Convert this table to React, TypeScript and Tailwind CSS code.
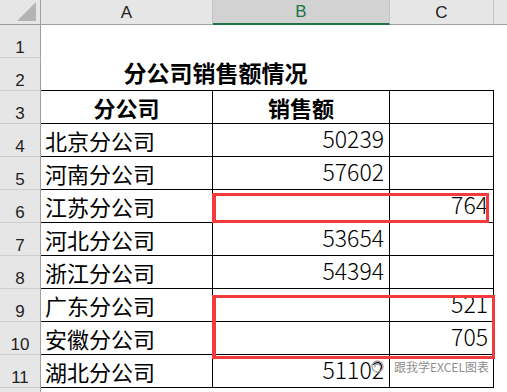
const ROW = "grid h-[33px] grid-cols-[41px_172px_177px_104px_1fr]";
const NUM_CELL =
  "flex items-end justify-center border-r border-b border-r-[#9e9e9e] border-b-[#cfcfcf] bg-[#e6e6e6] pb-[1px] font-['Liberation_Sans',sans-serif] text-[17px] leading-none text-[#222]";

const rows = [
  { n: 4, name: "北京分公司", b: "50239", c: "" },
  { n: 5, name: "河南分公司", b: "57602", c: "" },
  { n: 6, name: "江苏分公司", b: "", c: "764" },
  { n: 7, name: "河北分公司", b: "53654", c: "" },
  { n: 8, name: "浙江分公司", b: "54394", c: "" },
  { n: 9, name: "广东分公司", b: "", c: "521" },
  { n: 10, name: "安徽分公司", b: "", c: "705" },
  { n: 11, name: "湖北分公司", b: "51102", c: "" },
];

function HeaderRow() {
  return (
    <div className="grid h-[25px] grid-cols-[41px_172px_177px_104px_1fr] font-['Liberation_Sans',sans-serif] text-[17px] leading-none">
      <div className="relative border-r border-b border-[#9e9e9e] bg-[#e6e6e6]">
        <svg className="absolute left-[17px] top-[2px]" width="19" height="19" viewBox="0 0 19 19">
          <polygon points="19,0 19,19 0,19" fill="#b4b4b4" />
        </svg>
      </div>
      <div className="flex items-center justify-center border-r border-b border-r-[#c4c4c4] border-b-[#9e9e9e] bg-[#e6e6e6] text-[#222]">A</div>
      <div className="flex items-center justify-center border-r border-r-[#c4c4c4] border-b-2 border-b-[#217346] bg-[#d2d2d2] text-[#217346]">B</div>
      <div className="flex items-center justify-center border-r border-b border-r-[#c4c4c4] border-b-[#9e9e9e] bg-[#e6e6e6] text-[#222]">C</div>
      <div className="border-b border-[#9e9e9e] bg-[#e6e6e6]" />
    </div>
  );
}

export default function App() {
  return (
    <div className="relative h-[392px] w-[507px] overflow-hidden bg-white font-['Noto_Sans_CJK_SC',sans-serif] text-black">
      <HeaderRow />

      <div className={ROW}>
        <div className={NUM_CELL}>1</div>
        <div className="col-span-4" />
      </div>

      <div className={ROW}>
        <div className={NUM_CELL}>2</div>
        <div className="col-span-2 flex items-end justify-center border-b border-black pb-[6px] text-[23px] font-bold leading-none">
          分公司销售额情况
        </div>
        <div className="border-b border-black" />
        <div />
      </div>

      <div className={ROW}>
        <div className={NUM_CELL}>3</div>
        <div className="flex items-end justify-center border-r border-b border-black pb-[5px] text-[22px] font-bold leading-none">分公司</div>
        <div className="flex items-end justify-center border-r border-b border-black pb-[5px] text-[22px] font-bold leading-none">销售额</div>
        <div className="border-r border-b border-black" />
        <div />
      </div>

      {rows.map((r) => (
        <div key={r.n} className={ROW}>
          <div className={NUM_CELL}>{r.n}</div>
          <div className="flex items-end border-r border-b border-black pb-[5px] pl-[4px] text-[22px] leading-none">{r.name}</div>
          <div className="flex items-end justify-end border-r border-b border-black pb-[6px] pr-[5px] text-[23px] font-light leading-none">{r.b}</div>
          <div className="flex items-end justify-end border-r border-b border-black pb-[6px] pr-[5px] text-[23px] font-light leading-none">{r.c}</div>
          <div />
        </div>
      ))}

      {/* row 12 only peeks in at the bottom edge */}
      <div className={ROW}>
        <div className="border-r border-[#9e9e9e] bg-[#e6e6e6]" />
        <div className="col-span-4" />
      </div>

      {/* red highlight boxes */}
      <div className="absolute left-[212px] top-[193px] h-[30px] w-[277px] border-[3px] border-l-4 border-[#f23c3c]" />
      <div className="absolute left-[212px] top-[295px] h-[64px] w-[283px] border-[3px] border-l-4 border-[#f23c3c]" />

      {/* watermark */}
      <div className="absolute left-[371px] top-[360px] flex items-center gap-[10px] text-[12px] leading-none text-[#8f8f8f]">
        <svg width="13" height="13" viewBox="0 0 13 13" fill="none" stroke="#a0a0a0" strokeWidth="1.3">
          <circle cx="6.5" cy="6.5" r="5.5" />
          <path d="M4 7.5 A2.5 2.5 0 0 1 9 6" />
        </svg>
        <span className="[text-shadow:0_0_2px_#fff]">跟我学EXCEL图表</span>
      </div>
    </div>
  );
}
